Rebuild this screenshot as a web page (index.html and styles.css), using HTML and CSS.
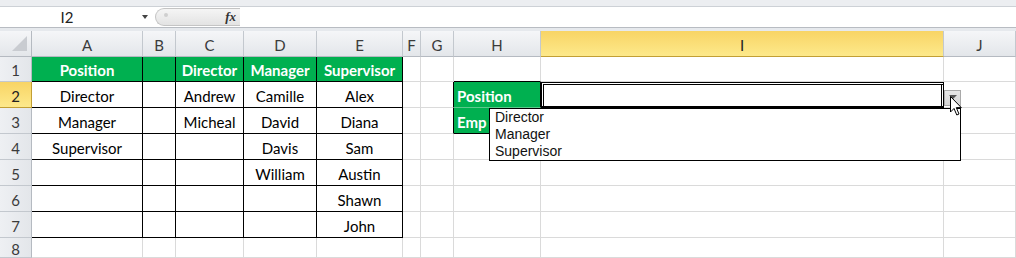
FILE: index.html
```html
<!DOCTYPE html>
<html lang="en">
<head>
    <meta charset="UTF-8">
    <title>Position lookup</title>
    <link rel="stylesheet" href="styles.css">
</head>
<body>

<div class="top-band"></div>

<!-- Name box + formula bar -->
<div class="formula-bar">
    <div class="name-box">
        <span class="name">I2</span>
        <span class="caret"></span>
    </div>
    <div class="fx-pill">
        <span class="grip"></span>
        <span class="fx">fx</span>
    </div>
    <div class="formula-input"></div>
</div>
<div class="bar-gap"></div>

<!-- Worksheet -->
<div class="sheet">
    <!-- column headers -->
    <div class="cell corner"><span class="corner-mark"></span></div>
    <div class="cell col-head">A</div>
    <div class="cell col-head">B</div>
    <div class="cell col-head">C</div>
    <div class="cell col-head">D</div>
    <div class="cell col-head">E</div>
    <div class="cell col-head">F</div>
    <div class="cell col-head">G</div>
    <div class="cell col-head">H</div>
    <div class="cell col-head active">I</div>
    <div class="cell col-head">J</div>

    <!-- row 1 -->
    <div class="cell row-head">1</div>
    <div class="cell data head">Position</div>
    <div class="cell data head"></div>
    <div class="cell data head">Director</div>
    <div class="cell data head">Manager</div>
    <div class="cell data head">Supervisor</div>
    <div class="cell"></div>
    <div class="cell"></div>
    <div class="cell edge-bottom"></div>
    <div class="cell"></div>
    <div class="cell"></div>

    <!-- row 2 -->
    <div class="cell row-head active">2</div>
    <div class="cell data">Director</div>
    <div class="cell data"></div>
    <div class="cell data">Andrew</div>
    <div class="cell data">Camille</div>
    <div class="cell data">Alex</div>
    <div class="cell"></div>
    <div class="cell edge-right"></div>
    <div class="cell head label edge-right">Position</div>
    <div class="cell selected">
        <span class="drop-btn"><span class="drop-arrow"></span></span>
        <ul class="drop-list">
            <li>Director</li>
            <li>Manager</li>
            <li>Supervisor</li>
        </ul>
        <svg class="cursor" width="13" height="21" viewBox="0 0 13 21">
            <path d="M0.5 0.5 L0.5 16 L4 12.5 L6.8 19 L9 18 L6.3 11.6 L11.3 11.6 Z" fill="#fff" stroke="#000" stroke-width="1"/>
        </svg>
    </div>
    <div class="cell"></div>

    <!-- row 3 (label mostly hidden behind the open list) -->
    <div class="cell row-head">3</div>
    <div class="cell data">Manager</div>
    <div class="cell data"></div>
    <div class="cell data">Micheal</div>
    <div class="cell data">David</div>
    <div class="cell data">Diana</div>
    <div class="cell"></div>
    <div class="cell edge-right"></div>
    <div class="cell head label data">Emp</div>
    <div class="cell"></div>
    <div class="cell"></div>

    <!-- row 4 -->
    <div class="cell row-head">4</div>
    <div class="cell data">Supervisor</div>
    <div class="cell data"></div>
    <div class="cell data"></div>
    <div class="cell data">Davis</div>
    <div class="cell data">Sam</div>
    <div class="cell"></div>
    <div class="cell"></div>
    <div class="cell"></div>
    <div class="cell"></div>
    <div class="cell"></div>

    <!-- row 5 -->
    <div class="cell row-head">5</div>
    <div class="cell data"></div>
    <div class="cell data"></div>
    <div class="cell data"></div>
    <div class="cell data">William</div>
    <div class="cell data">Austin</div>
    <div class="cell"></div>
    <div class="cell"></div>
    <div class="cell"></div>
    <div class="cell"></div>
    <div class="cell"></div>

    <!-- row 6 -->
    <div class="cell row-head">6</div>
    <div class="cell data"></div>
    <div class="cell data"></div>
    <div class="cell data"></div>
    <div class="cell data"></div>
    <div class="cell data">Shawn</div>
    <div class="cell"></div>
    <div class="cell"></div>
    <div class="cell"></div>
    <div class="cell"></div>
    <div class="cell"></div>

    <!-- row 7 -->
    <div class="cell row-head">7</div>
    <div class="cell data"></div>
    <div class="cell data"></div>
    <div class="cell data"></div>
    <div class="cell data"></div>
    <div class="cell data">John</div>
    <div class="cell"></div>
    <div class="cell"></div>
    <div class="cell"></div>
    <div class="cell"></div>
    <div class="cell"></div>

    <!-- row 8 -->
    <div class="cell row-head">8</div>
    <div class="cell"></div>
    <div class="cell"></div>
    <div class="cell"></div>
    <div class="cell"></div>
    <div class="cell"></div>
    <div class="cell"></div>
    <div class="cell"></div>
    <div class="cell"></div>
    <div class="cell"></div>
    <div class="cell"></div>
</div>

</body>
</html>
```

FILE: styles.css
```css
body {
    margin: 0;
    width: 1016px;
    height: 258px;
    overflow: hidden;
    background-color: #fff;
    font-family: Lato, "Liberation Sans", sans-serif;
    color: #000;
}

.top-band {
    height: 6px;
    background-color: #eceef1;
    border-bottom: 1px solid #cdd1d6;
}

/* formula bar */
.formula-bar {
    display: flex;
    align-items: center;
    height: 20px;
    border-bottom: 1px solid #b8bcc2;
}

.name-box {
    display: flex;
    align-items: center;
    width: 150px;
}

.name-box .name {
    width: 134px;
    text-align: center;
    font-size: 15px;
    color: #222;
}

.caret {
    margin-left: 8px;
    border-left: 3px solid transparent;
    border-right: 3px solid transparent;
    border-top: 4px solid #444;
}

.fx-pill {
    box-sizing: border-box;
    display: flex;
    align-items: center;
    justify-content: space-between;
    margin-left: 5px;
    width: 85px;
    height: 18px;
    padding: 0 4px 0 8px;
    border: 1px solid #c4c4c4;
    border-right: none;
    border-radius: 10px 0 0 10px;
    background: linear-gradient(#f5f5f5, #e3e3e3);
}

.grip {
    width: 4px;
    height: 4px;
    margin-top: -4px;
    border-radius: 2px;
    background-color: #cfcfcf;
}

.fx {
    font-family: "Liberation Serif", serif;
    font-style: italic;
    font-weight: bold;
    font-size: 13px;
    color: #333;
}

.formula-input {
    flex: 1;
    height: 100%;
}

.bar-gap {
    height: 3px;
    background-color: #e6e9ed;
}

/* worksheet grid */
.sheet {
    display: grid;
    grid-template-columns: 32px 111px 33px 68px 73px 86px 18px 33px 87px 403px 72px;
    grid-template-rows: 26px 25px repeat(6, 26px) 20px;
}

.cell {
    box-sizing: border-box;
    display: flex;
    align-items: center;
    justify-content: center;
    padding-top: 2px;
    font-size: 15px;
    white-space: nowrap;
    border-right: 1px solid #dadada;
    border-bottom: 1px solid #dadada;
}

.corner {
    align-items: flex-end;
    justify-content: flex-end;
    padding: 0 4px 5px 0;
    background: linear-gradient(#f5f6f8, #e3e6ea);
    border-right-color: #b5bac1;
    border-bottom-color: #b5bac1;
}

.corner-mark {
    border-left: 15px solid transparent;
    border-bottom: 15px solid #c9ccd1;
}

.col-head {
    color: #3b3b3b;
    background: linear-gradient(#f5f6f8, #e3e6ea);
    border-right-color: #c3c8ce;
    border-bottom-color: #b5bac1;
}

.row-head {
    color: #3b3b3b;
    background: linear-gradient(90deg, #eef0f3, #e3e6ea);
    border-right-color: #b5bac1;
    border-bottom-color: #c3c8ce;
}

.col-head.active,
.row-head.active {
    color: #222;
    background: linear-gradient(#f8d465, #fde98b);
    border-bottom-color: #c29f35;
}

.row-head.active {
    border-right-color: #c29f35;
}

.data {
    border-right-color: #000;
    border-bottom-color: #000;
}

.edge-right {
    border-right-color: #000;
}

.edge-bottom {
    border-bottom-color: #000;
}

.head {
    background-color: #00b050;
    color: #fff;
    font-weight: 700;
}

.label {
    justify-content: flex-start;
    padding-left: 3px;
    border-bottom-color: #5cc98c;
}

.label.data {
    border-bottom-color: #000;
}

/* active cell with its validation dropdown */
.selected {
    position: relative;
    border-right-color: #000;
    border-bottom: 2px solid #000;
    box-shadow: inset 1px 1px 0 #000, inset 2px 2px 0 #fff, inset 3px 3px 0 #000, inset -1px 0 0 #fff, inset -2px 0 0 #000;
}

.drop-btn {
    position: absolute;
    left: 403px;
    top: 8px;
    box-sizing: border-box;
    width: 17px;
    height: 16px;
    display: flex;
    align-items: center;
    justify-content: center;
    background: linear-gradient(#e6e6e6, #d6d6d6);
    border: 1px solid #a9a9a9;
    z-index: 2;
}

.drop-arrow {
    border-left: 4px solid transparent;
    border-right: 4px solid transparent;
    border-top: 4px solid #555;
    margin-top: -2px;
}

.drop-list {
    position: absolute;
    left: -52px;
    top: 26px;
    width: 472px;
    margin: 0;
    padding: 0 5px;
    box-sizing: border-box;
    list-style-type: none;
    background-color: #fff;
    border: 1px solid #000;
    font-family: "Liberation Sans", sans-serif;
    font-size: 14px;
    line-height: 17px;
    color: #111;
    z-index: 2;
}

.cursor {
    position: absolute;
    left: 409px;
    top: 14px;
    z-index: 3;
}
```
